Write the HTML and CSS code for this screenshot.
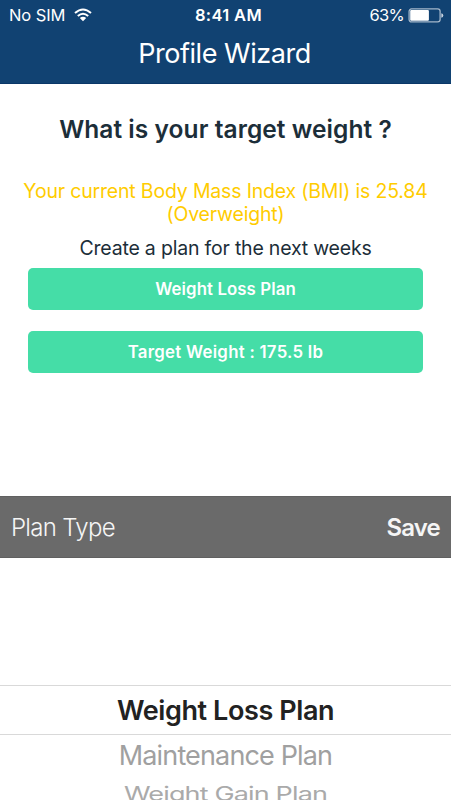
FILE: index.html
```html
<!DOCTYPE html>
<html lang="en">
<head>
<meta charset="utf-8">
<title>Profile Wizard</title>
<link rel="stylesheet" href="styles.css">
</head>
<body>
<div class="screen">
  <header class="header">
    <div class="status">
      <div class="carrier"><span class="carrier-name">No SIM</span>
        <svg class="wifi" width="18" height="14" viewBox="0 0 18 14" fill="none" stroke="#fff" stroke-width="2"><path d="M1 5Q9-2 17 5M3.8 8Q9 3.5 14.2 8"/><path fill="#fff" stroke="none" d="M5.8 10Q9 7.3 12.2 10L9 13.3Z"/></svg>
      </div>
      <span class="time">8:41 AM</span>
      <div class="power"><span class="percent">63%</span>
        <svg class="battery" width="36" height="15" viewBox="0 0 36 15"><rect x="1.1" y=".9" width="31" height="13" rx="2.4" fill="none" stroke="#a4b7ca" stroke-width="1.3"/><rect x="2.2" y="2" width="18.7" height="10.8" rx="1" fill="#fff"/><path d="M33.3 5.2Q35.3 5.5 35.3 7.5Q35.3 9.5 33.3 9.8Z" fill="#c8d3df"/></svg>
      </div>
    </div>
    <div class="title"><span>Profile Wizard</span></div>
  </header>
  <main class="content">
    <h1 class="question"><span>What is your target weight ?</span></h1>
    <p class="bmi"><span class="bmi-main">Your current Body Mass Index (BMI) is 25.84</span><br><span class="bmi-class">(Overweight)</span></p>
    <p class="hint"><span>Create a plan for the next weeks</span></p>
    <button class="btn"><span class="btn-plan">Weight Loss Plan</span></button>
    <button class="btn"><span class="btn-target">Target Weight : 175.5 lb</span></button>
  </main>
  <div class="toolbar"><span class="label">Plan Type</span><span class="save">Save</span></div>
  <div class="picker">
    <div class="option selected"><span>Weight Loss Plan</span></div>
    <div class="option next"><span>Maintenance Plan</span></div>
    <div class="option last"><span>Weight Gain Plan</span></div>
  </div>
</div>
</body>
</html>
```
FILE: styles.css
```css
* { box-sizing: border-box; }
body { margin: 0; background: #fff; font-family: Inter, "Liberation Sans", sans-serif; }
.screen { width: 451px; height: 800px; overflow: hidden; display: flex; flex-direction: column; white-space: nowrap; }
.header { height: 84px; flex: none; background: #114272; color: #fff; border-bottom: 1px solid #0b3768; }
.status { height: 30px; padding: 0 7px 0 9px; display: grid; grid-template-columns: 1fr auto 1fr; align-items: center; font-size: 16.5px; line-height: 30px; }
.carrier, .power { display: flex; align-items: center; }
.carrier { gap: 9px; }
.carrier-name { letter-spacing: -.1px; }
.power { justify-content: flex-end; gap: 4px; }
.percent { letter-spacing: -.7px; }
.time { font-weight: 600; letter-spacing: .35px; padding-left: 4px; }
.title { height: 48px; line-height: 48px; padding-right: 2px; text-align: center; font-size: 27px; letter-spacing: -.45px; }
.content { height: 412px; flex: none; padding: 28px 28px 0; text-align: center; color: #1c2e39; }
.question { margin: 0; font-size: 24.5px; line-height: 34px; font-weight: 600; letter-spacing: .06px; }
.bmi { margin: 34px -20px 0; color: #fc0; font-size: 19.5px; line-height: 23px; letter-spacing: -.18px; }
.hint { margin: 10px 0 0; font-size: 19.5px; line-height: 24px; letter-spacing: -.2px; }
.btn { display: block; width: 395px; height: 42px; margin: 8px 0 21px; padding: 0; border: 0; border-radius: 5px; background: #45dda7; color: #fff; font: 600 16.8px/42px Inter, sans-serif; }
.btn-plan { letter-spacing: .1px; }
.btn-target { letter-spacing: .27px; }
.toolbar { height: 62px; flex: none; padding: 0 11px; background: #6a6a6a; border-top: 1px solid #606060; border-bottom: 1px solid #606060; color: #f5f5f5; display: flex; justify-content: space-between; align-items: center; font-size: 24px; }
.label { font-weight: 350; letter-spacing: -.7px; }
.save { font-weight: 600; letter-spacing: -.8px; }
.picker { height: 242px; padding-top: 127px; text-align: center; font-size: 27px; }
.selected { height: 50px; line-height: 49px; border-top: 1px solid #d9d9d9; border-bottom: 1px solid #d9d9d9; color: #222; font-weight: 600; letter-spacing: -.4px; }
.next { height: 41px; line-height: 41px; color: #a0a0a0; letter-spacing: -.85px; }
.last { height: 35px; line-height: 35px; color: #aaa; letter-spacing: -.85px; transform: scaleY(.75); }
```
